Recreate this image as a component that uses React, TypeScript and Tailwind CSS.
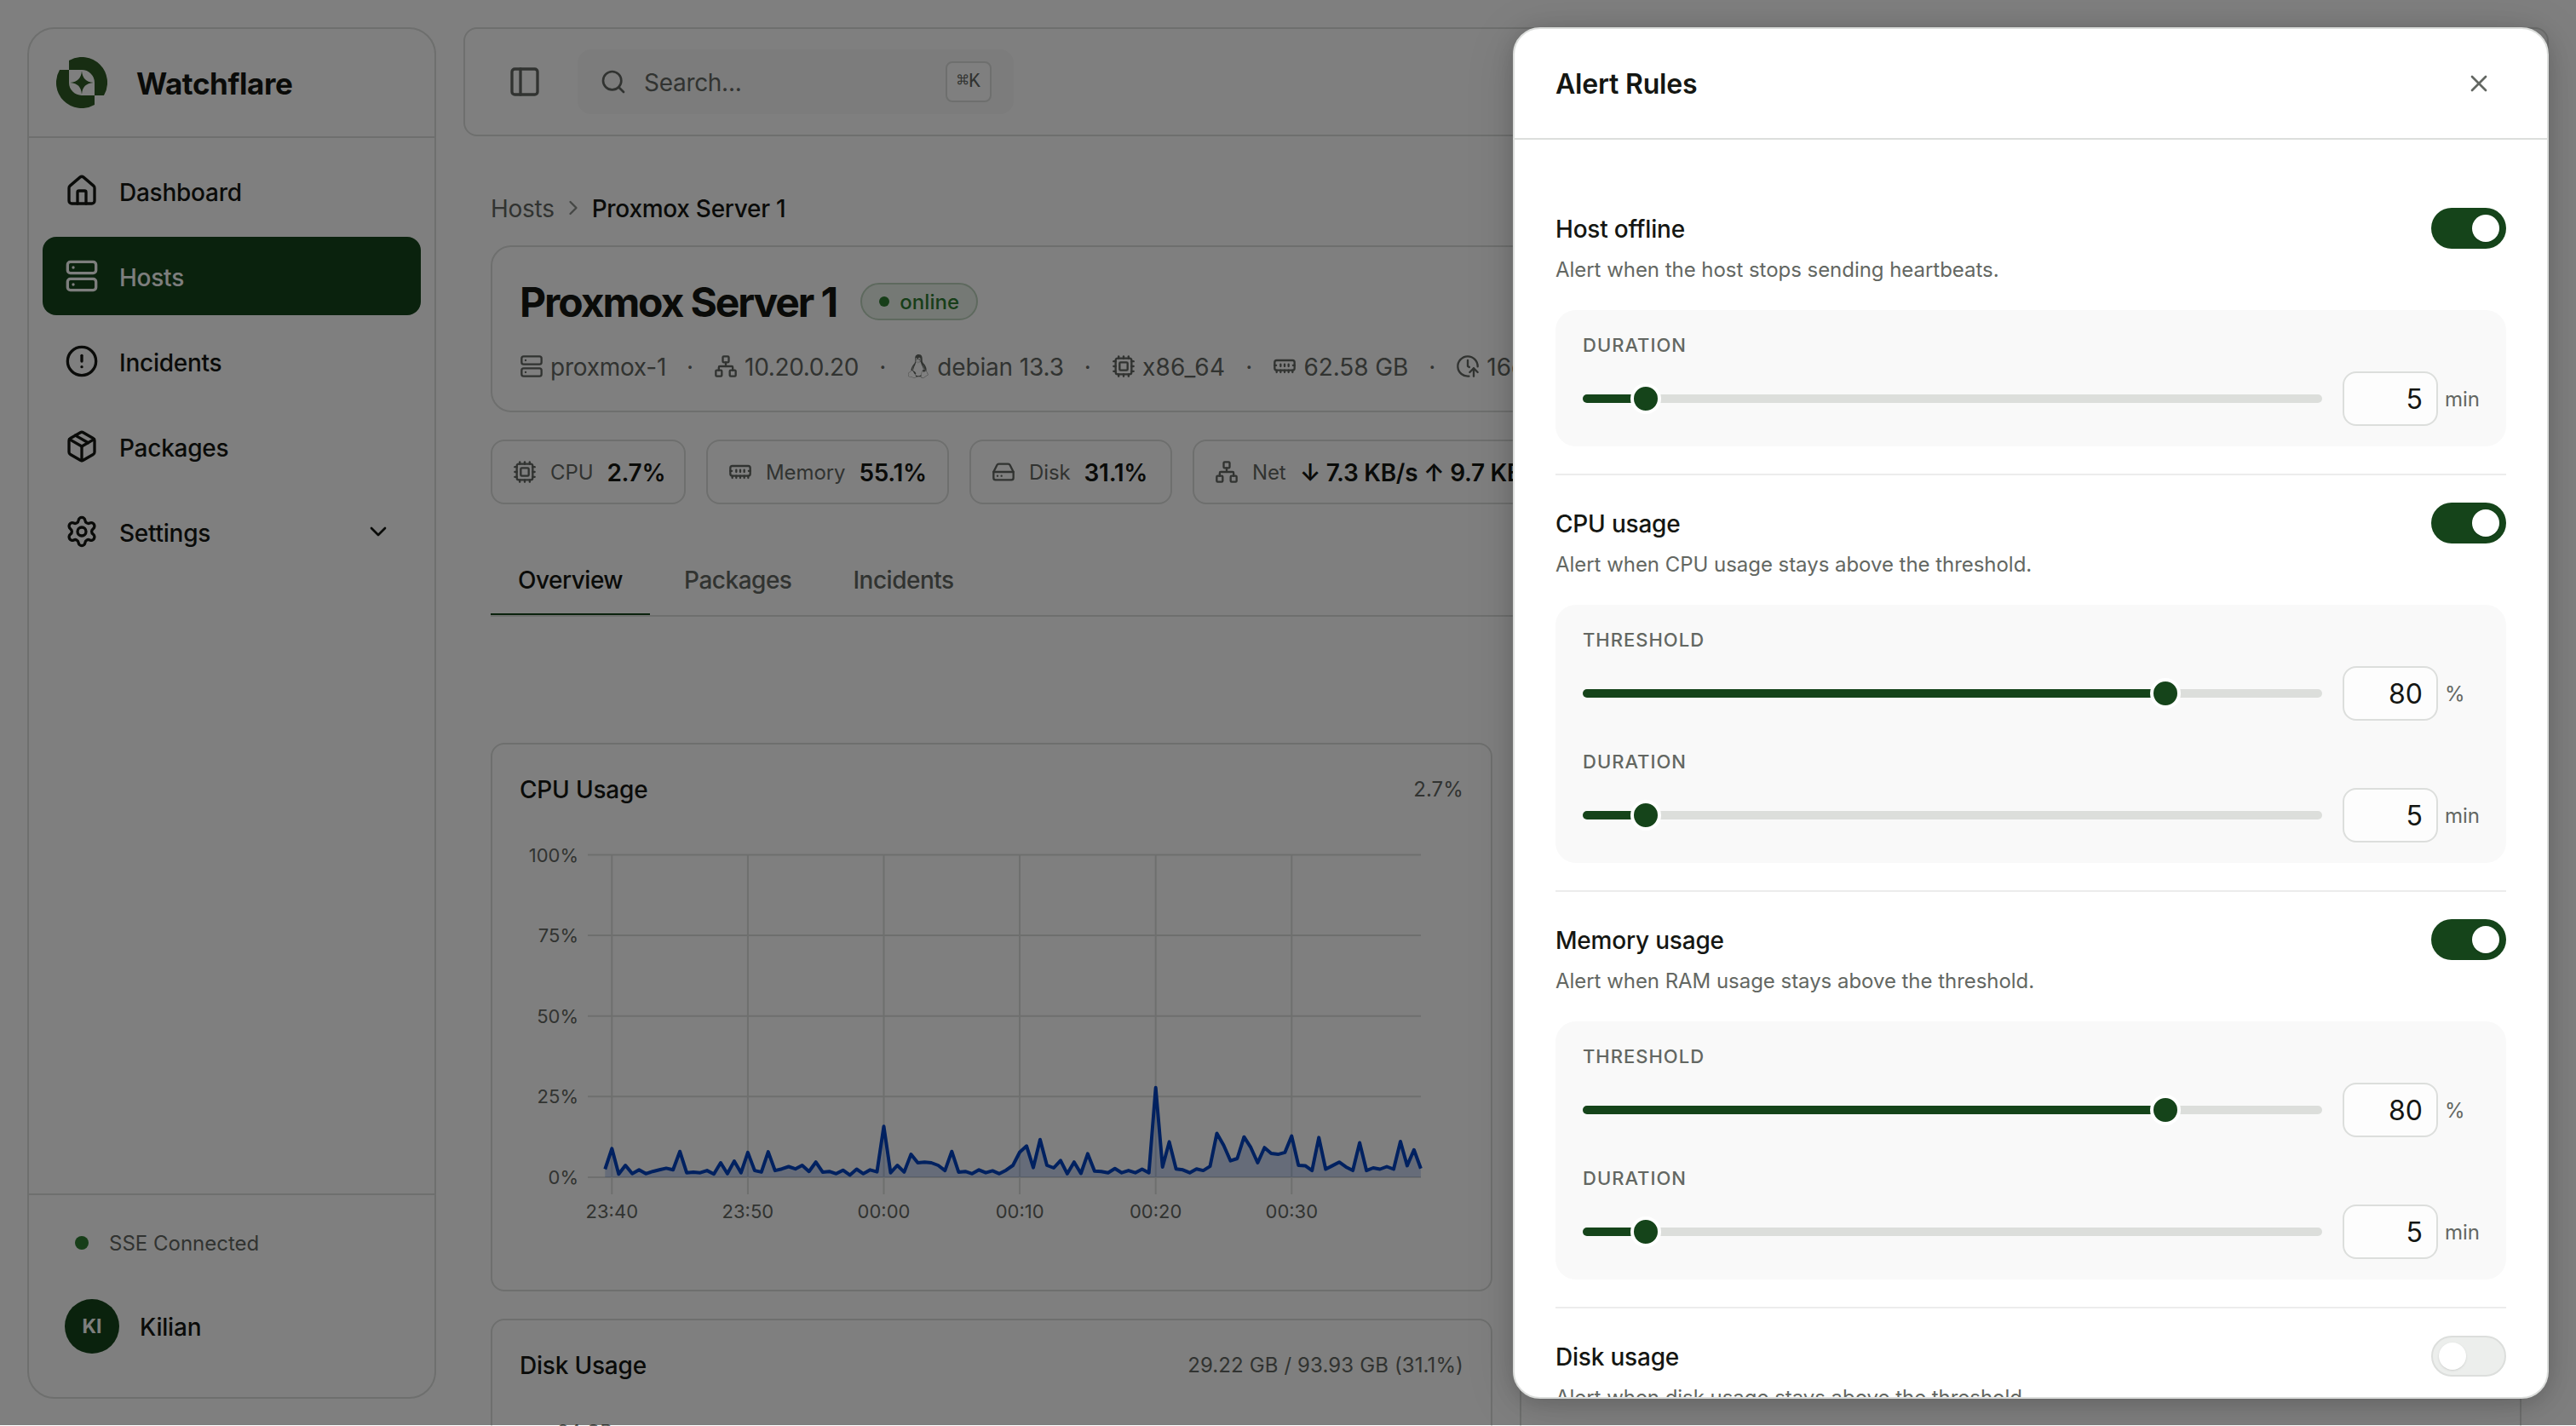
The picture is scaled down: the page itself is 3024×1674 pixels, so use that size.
import React, { useState } from "react";
import {
  ChevronDown,
  ChevronRight,
  CircleAlert,
  ClockArrowUp,
  Cpu,
  HardDrive,
  House,
  MemoryStick,
  Network,
  Package,
  PanelLeft,
  Search,
  Server,
  Settings,
  X,
} from "lucide-react";
import { FaLinux } from "react-icons/fa";

const navItems = [
  { label: "Dashboard", icon: House },
  { label: "Hosts", icon: Server, active: true },
  { label: "Incidents", icon: CircleAlert },
  { label: "Packages", icon: Package },
  { label: "Settings", icon: Settings, expandable: true },
];

const hostMeta = [
  { label: "proxmox-1", icon: Server, className: "tracking-[-0.25px]" },
  { label: "10.20.0.20", icon: Network, className: "tracking-[-0.35px]" },
  { label: "debian 13.3", icon: FaLinux, className: "tracking-[-0.15px]" },
  { label: "x86_64", icon: Cpu, className: "tracking-[0.3px]" },
  { label: "62.58 GB", icon: MemoryStick, className: "tracking-[-0.1px]" },
  { label: "16d 4h", icon: ClockArrowUp, className: "" },
];

const tabs = ["Overview", "Packages", "Incidents"];

// one sample every 30 seconds
const cpuSamples = [
  2.5, 8.9, 1, 3.7, 1.1, 2.3, 1.1, 1.8, 2.3, 2.8, 2.3, 8, 1.4, 1.6, 1.4, 2.1, 1,
  4.5, 1.1, 5, 1.4, 7.7, 2.1, 1.6, 7.9, 2.1, 2.6, 3.3, 2.6, 3.7, 1.8, 4.7, 1.6,
  1.8, 1.1, 2.2, 0.7, 2.5, 1.1, 2.3, 1.7, 15.8, 1.4, 3.7, 1.6, 7.1, 4.5, 4.7,
  4.5, 3.7, 2.1, 8, 1.6, 1.8, 1.1, 2.3, 1.4, 2, 1.1, 2.2, 3.7, 7.8, 9.7, 3,
  11.7, 3.7, 2.9, 5.2, 1.1, 4.7, 1.2, 7.3, 1.9, 1.8, 1.4, 2.7, 1.4, 2.1, 1.4,
  2.5, 1.4, 27.8, 3.2, 11, 2.6, 2.3, 1.4, 2.6, 2.1, 3.4, 13.6, 9.9, 5.1, 5.8,
  12.5, 9.2, 4.5, 9.2, 7.4, 7.1, 7.7, 12.8, 3.7, 3.6, 2.1, 12.3, 2.5, 3.6, 4.7,
  3.2, 2.1, 10.7, 2.1, 2.9, 2.5, 3.3, 2.5, 11.1, 3.6, 8.5, 2.7,
];

const timeLabels = ["23:40", "23:50", "00:00", "00:10", "00:20", "00:30"];
const percentLabels = ["100%", "75%", "50%", "25%", "0%"];

const alertRules = [
  {
    title: "Host offline",
    description: "Alert when the host stops sending heartbeats.",
    enabled: true,
    fields: [{ label: "Duration", value: "5", unit: "min", position: 8.55 }],
  },
  {
    title: "CPU usage",
    description: "Alert when CPU usage stays above the threshold.",
    enabled: true,
    fields: [
      { label: "Threshold", value: "80", unit: "%", position: 78.75 },
      { label: "Duration", value: "5", unit: "min", position: 8.55 },
    ],
  },
  {
    title: "Memory usage",
    description: "Alert when RAM usage stays above the threshold.",
    enabled: true,
    fields: [
      { label: "Threshold", value: "80", unit: "%", position: 78.75 },
      { label: "Duration", value: "5", unit: "min", position: 8.55 },
    ],
  },
  {
    title: "Disk usage",
    description: "Alert when disk usage stays above the threshold.",
    enabled: false,
    fields: [],
  },
];

const Logo = () => (
  <svg viewBox="0 0 180 180" className="size-[60px]" fill="#2e5a24">
    <path d="M45 12A90 90 0 0 1 168 135H135V90A45 45 0 0 0 90 45H45Z" />
    <path d="M12 45H45V90A45 45 0 0 0 90 135H135V168A90 90 0 0 1 12 45Z" />
    <path d="M90 49C93 76 104 87 131 90C104 93 93 104 90 131C87 104 76 93 49 90C76 87 87 76 90 49Z" />
  </svg>
);

const Sidebar = () => (
  <aside className="flex h-[1610px] w-[480px] shrink-0 flex-col rounded-[32px] border-2 border-[#dcdedc] bg-white">
    <div className="flex h-[128px] items-center gap-[34px] border-b-2 border-[#dcdedc] pl-8">
      <Logo />
      <span className="pt-[2px] text-[35px] font-bold tracking-[-0.4px]">Watchflare</span>
    </div>
    <nav className="flex flex-1 flex-col gap-2 p-4">
      {navItems.map(({ label, icon: Icon, active, expandable }) => (
        <a
          key={label}
          className={
            active
              ? "flex h-[92px] items-center gap-6 rounded-[16px] bg-[#15441a] px-[26px] text-[28px] font-medium tracking-[-0.25px] text-[#fbfdfb]"
              : "flex h-[92px] items-center gap-6 rounded-[16px] px-[26px] text-[28px] font-medium tracking-[-0.25px]"
          }
        >
          <Icon size={40} />
          <span className="flex-1 pt-[3px]">{label}</span>
          {expandable && <ChevronDown size={32} className="mr-2" />}
        </a>
      ))}
    </nav>
    <div className="flex h-[239px] flex-col border-t-2 border-[#dcdedc] pt-[32px]">
      <div className="flex h-12 items-center gap-6 pl-[54px] text-[24px] text-[#636762]">
        <span className="size-4 rounded-full bg-[#2f7d32]"></span>
        <span className="pt-[2px]">SSE Connected</span>
      </div>
      <div className="mt-[42px] flex items-center gap-6 pl-[42px] text-[28px] font-medium">
        <span className="flex size-16 items-center justify-center rounded-full bg-[#15441a] text-[23px] font-bold text-[#fbfdfb]">
          KI
        </span>
        <span className="pt-[2px] tracking-[-0.2px]">Kilian</span>
      </div>
    </div>
  </aside>
);

const TopBar = () => (
  <header className="flex h-[128px] shrink-0 items-center rounded-[16px] border-2 border-[#dcdedc] bg-white pl-[50px] text-[#636762]">
    <PanelLeft size={40} />
    <div className="ml-[42px] flex h-[76px] w-[512px] items-center rounded-[16px] bg-[#f8f8f8] pl-[26px] pr-[26px]">
      <Search size={32} />
      <span className="ml-5 flex-1 pt-[2px] text-[28px] tracking-[-0.3px]">Search...</span>
      <kbd className="flex h-12 w-[54px] items-center justify-center rounded-[8px] border-2 border-[#dcdedc] bg-white font-['Liberation_Mono','DejaVu_Sans_Mono',monospace] text-[23px]">
        ⌘K
      </kbd>
    </div>
  </header>
);

const StatChip = ({ icon: Icon, label, className, children }: any) => (
  <div
    className={`flex h-[76px] shrink-0 items-center gap-4 rounded-[16px] border-2 border-[#dcdedc] bg-white pl-6 ${className}`}
  >
    <Icon size={28} className="text-[#636762]" />
    <span className="pt-[2px] text-[24px] tracking-[-0.1px] text-[#636762]">{label}</span>
    <span className="whitespace-nowrap pt-[2px] text-[28px] font-semibold tracking-[-0.3px]">
      {children}
    </span>
  </div>
);

const CpuChart = () => {
  const x = (i: number) => 710.3 + i * 7.98;
  const y = (value: number) => 1382 - value * 3.785;
  const line = cpuSamples.map((v, i) => `${x(i).toFixed(1)},${y(v).toFixed(1)}`).join(" ");

  return (
    <svg viewBox="610 948 1108 500" width="1108" height="500">
      <g stroke="#dcdedc" strokeWidth="2">
        {percentLabels.map((label, i) => (
          <line key={label} x1="690" x2="1668" y1={1003.5 + i * 94.6} y2={1003.5 + i * 94.6} />
        ))}
        {timeLabels.map((label, i) => (
          <line key={label} x1={718.3 + i * 159.6} x2={718.3 + i * 159.6} y1="1004" y2="1402" />
        ))}
      </g>
      <g className="fill-[#636762] text-[22px]">
        {percentLabels.map((label, i) => (
          <text key={label} x="679" y={1011.5 + i * 94.6} textAnchor="end">
            {label}
          </text>
        ))}
        {timeLabels.map((label, i) => (
          <text key={label} x={718.3 + i * 159.6} y="1430" textAnchor="middle">
            {label}
          </text>
        ))}
      </g>
      <polygon points={`${x(0)},1382 ${line} ${x(120)},1382`} fill="#0042c0" fillOpacity="0.2" />
      <polyline points={line} fill="none" stroke="#0042c0" strokeWidth="4" strokeLinejoin="round" />
    </svg>
  );
};

const ChartCard = ({ title, value, children }: any) => (
  <section className="h-[644px] rounded-[16px] border-2 border-[#dcdedc] bg-white px-8 pt-[33px]">
    <div className="mb-px flex h-10 items-center justify-between">
      <h3 className="text-[28px] font-medium tracking-[-0.2px]">{title}</h3>
      <span className="text-[24px] tracking-[0.12px] text-[#636762]">{value}</span>
    </div>
    {children}
  </section>
);

const HostPage = () => (
  <main className="flex min-w-0 flex-1 flex-col">
    <TopBar />
    <div className="flex flex-col px-8 pt-16">
      <div className="flex h-10 items-center gap-2 text-[28px] tracking-[-0.28px]">
        <span className="pt-[2px] text-[#636762]">Hosts</span>
        <ChevronRight size={28} className="text-[#8b8f8a]" />
        <span className="pt-[2px] font-medium">Proxmox Server 1</span>
      </div>

      <section className="mt-6 h-[196px] rounded-[24px] border-2 border-[#dcdedc] bg-white p-8">
        <div className="flex h-16 items-center gap-7">
          <h1 className="pt-[2px] text-[48px] font-bold tracking-[-2.1px]">Proxmox Server 1</h1>
          <span className="flex h-[44px] items-center gap-3 rounded-full border-2 border-[#bcd2bd] bg-[#eaf2ea] px-5 text-[24px] font-medium text-[#2f7d32]">
            <span className="size-3 rounded-full bg-[#2f7d32]"></span>
            <span className="pt-px tracking-[0.1px]">online</span>
          </span>
        </div>
        <div className="mt-6 flex h-10 items-center gap-6 whitespace-nowrap text-[28px] text-[#636762]">
          {hostMeta.map(({ label, icon: Icon, className }, i) => (
            <React.Fragment key={label}>
              {i > 0 && <span className="pt-[2px]">·</span>}
              <span className="flex items-center gap-2">
                <Icon size={28} />
                <span className={`pt-[2px] ${className}`}>{label}</span>
              </span>
            </React.Fragment>
          ))}
        </div>
      </section>

      <div className="mt-8 flex gap-6">
        <StatChip icon={Cpu} label="CPU" className="w-[229px]">
          2.7%
        </StatChip>
        <StatChip icon={MemoryStick} label="Memory" className="w-[285px]">
          55.1%
        </StatChip>
        <StatChip icon={HardDrive} label="Disk" className="w-[238px]">
          31.1%
        </StatChip>
        <StatChip icon={Network} label="Net" className="pr-6">
          ↓ 7.3 KB/s ↑ 9.7 KB/s
        </StatChip>
      </div>

      <div className="mt-12 flex h-[84px] gap-2 border-b-2 border-[#dcdedc] text-[28px] font-medium tracking-[-0.5px]">
        {tabs.map((tab) => (
          <button
            key={tab}
            className={
              tab === "Overview"
                ? "border-b-2 border-[#15441a] px-8 pt-[2px]"
                : "border-b-2 border-transparent px-8 pt-[2px] text-[#636762]"
            }
          >
            {tab}
          </button>
        ))}
      </div>

      <div className="mt-[148px] grid grid-cols-2 gap-8">
        <ChartCard title="CPU Usage" value="2.7%">
          <CpuChart />
        </ChartCard>
        <ChartCard />
        <ChartCard title="Disk Usage" value="29.22 GB / 93.93 GB (31.1%)">
          <svg viewBox="610 1624 1108 100" width="1108" height="100">
            <text x="719" y="1687.5" textAnchor="end" className="fill-[#636762] text-[22px]">
              94 GB
            </text>
          </svg>
        </ChartCard>
        <ChartCard />
      </div>
    </div>
  </main>
);

const Toggle = ({ checked, onChange }: { checked: boolean; onChange: () => void }) => (
  <button
    role="switch"
    aria-checked={checked}
    onClick={onChange}
    className={
      checked
        ? "flex h-12 w-[88px] items-center justify-end rounded-full bg-[#15441a] px-2"
        : "flex h-12 w-[88px] items-center rounded-full border-2 border-[#dcdedc] bg-[#eceeec] px-[7px]"
    }
  >
    <span className="size-8 rounded-full bg-white shadow-sm"></span>
  </button>
);

const RuleField = ({ label, value, unit, position }: any) => {
  const [current, setCurrent] = useState(value);

  return (
    <div>
      <div className="-mb-px pt-px text-[22px] font-medium uppercase leading-8 tracking-[1px] text-[#636762]">
        {label}
      </div>
      <div className="mt-4 flex items-center">
        <div className="relative flex h-[10px] flex-1 items-center rounded-full bg-[#dcdedb]">
          <div className="h-full rounded-full bg-[#15441a]" style={{ width: `${position}%` }}></div>
          <div
            className="absolute size-9 -translate-x-1/2 rounded-full border-4 border-white bg-[#15441a]"
            style={{ left: `${position}%` }}
          ></div>
        </div>
        <input
          className="ml-6 h-16 w-[112px] rounded-[16px] border-2 border-[#dcdedc] bg-[#fdfdfd] pr-4 pt-px text-right text-[32px]"
          value={current}
          onChange={(event) => setCurrent(event.target.value)}
        />
        <span className="ml-2 w-10 pt-[2px] text-[24px] text-[#636762]">{unit}</span>
      </div>
    </div>
  );
};

const AlertRule = ({ title, description, enabled: initial, fields }: any) => {
  const [enabled, setEnabled] = useState(initial);

  return (
    <div className="border-b-2 border-[#ececec] py-8">
      <div className="flex items-start justify-between">
        <div className="-mb-px pt-px">
          <h3 className="text-[28px] font-medium leading-[48px] tracking-[-0.2px]">{title}</h3>
          <p className="mt-2 text-[24px] leading-8 tracking-[-0.04px] text-[#636762]">
            {description}
          </p>
        </div>
        <Toggle checked={enabled} onChange={() => setEnabled(!enabled)} />
      </div>
      {fields.length > 0 && (
        <div className="mt-8 flex flex-col gap-[31px] rounded-[24px] bg-[#f9f9f9] px-8 py-6">
          {fields.map((field: any) => (
            <RuleField key={field.label} {...field} />
          ))}
        </div>
      )}
    </div>
  );
};

const AlertRulesDrawer = () => (
  <div className="absolute right-8 top-8 flex h-[1610px] w-[1216px] flex-col overflow-hidden rounded-[32px] border-2 border-[#dcdedc] bg-white shadow-[0_4px_24px_rgba(0,0,0,0.15),0_8px_60px_rgba(0,0,0,0.12)]">
    <div className="flex h-[130px] shrink-0 items-center justify-between border-b-2 border-[#dcdedc] pl-12 pr-16">
      <h2 className="pt-[2px] text-[32px] font-semibold tracking-[-0.2px]">Alert Rules</h2>
      <X size={32} className="text-[#636762]" />
    </div>
    <div className="flex flex-col px-12 pt-12">
      {alertRules.map((rule) => (
        <AlertRule key={rule.title} {...rule} />
      ))}
    </div>
  </div>
);

const App = () => {
  return (
    <div className="relative h-[1674px] w-[3024px] overflow-hidden bg-white font-['Inter','DejaVu_Sans',sans-serif] text-[#141612]">
      <div className="flex gap-8 p-8">
        <Sidebar />
        <HostPage />
      </div>
      <div className="absolute inset-x-0 top-0 h-[1673px] bg-black/50"></div>
      <AlertRulesDrawer />
    </div>
  );
};

export default App;
